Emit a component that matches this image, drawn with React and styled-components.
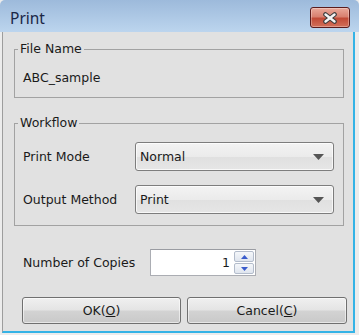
import React from 'react';
import styled, { createGlobalStyle } from 'styled-components';

const Global = createGlobalStyle`
  html, body { margin: 0; padding: 0; background: #ececec; }
  body { font-family: "DejaVu Sans", sans-serif; }
  * { box-sizing: border-box; }
`;

const Window = styled.div`
  width: 359px;
  height: 335px;
  display: flex;
  flex-direction: column;
  background: #ececec;
  border-top-left-radius: 5px;
  border-top-right-radius: 5px;
  overflow: hidden;
  font-family: "DejaVu Sans", sans-serif;
  font-size: 12.5px;
  color: #1a1a1a;
`;

const TitleBar = styled.div`
  height: 32px;
  flex: none;
  display: flex;
  justify-content: space-between;
  align-items: flex-start;
  padding: 0 9px 0 10px;
  background: linear-gradient(#9dbadb, #bcd5ee);
`;

const Title = styled.div`
  font-family: "Noto Sans", sans-serif;
  font-size: 15.5px;
  line-height: 20px;
  padding-top: 8px;
  color: #1b2747;
`;

const CloseButton = styled.button`
  margin-top: 7px;
  width: 40px;
  height: 21px;
  padding: 0;
  border: 1px solid #5b1c1c;
  border-radius: 3px;
  background: linear-gradient(#eaa99a 0%, #d98170 45%, #c24b37 55%, #d2705a 100%);
  box-shadow: inset 0 0 0 1px rgba(255, 255, 255, 0.3);
  display: flex;
  align-items: center;
  justify-content: center;
`;

const Body = styled.div`
  flex: 1;
  margin: 0 4px 2px 2px;
  padding: 9px 5px 0 11px;
  background: #e1e1e1;
  border-left: 1px solid #9d9d9d;
  border-right: 2px solid #35b3e6;
  border-bottom: 2px solid #35b3e6;
  display: flex;
  flex-direction: column;
`;

const Group = styled.fieldset`
  margin: ${(p) => (p.$first ? '0' : '17px')} 4px 0 0;
  padding: 0;
  min-width: 0;
  border: 1px solid #a2a2a2;
`;

const Legend = styled.legend`
  margin-left: 3px;
  padding: 0 2px 2px;
  line-height: 15px;
  font-size: 12.5px;
`;

const GroupText = styled.div`
  padding: 12px 0 12px 8px;
  line-height: 15px;
`;

const FormGrid = styled.div`
  display: grid;
  grid-template-columns: 112px 1fr;
  row-gap: 14px;
  align-items: center;
  padding: 10px 9px 11px 8px;
`;

const Label = styled.span`
  line-height: 15px;
  white-space: nowrap;
`;

const Select = styled.div`
  height: 29px;
  display: flex;
  align-items: center;
  justify-content: space-between;
  padding: 0 9px 0 4px;
  border: 1px solid #7d7d7d;
  border-radius: 3px;
  background: linear-gradient(#f3f3f3 0%, #ebebeb 50%, #e0e0e0 51%, #e6e6e6 100%);
  box-shadow: inset 0 0 0 1px rgba(255, 255, 255, 0.7);
  line-height: 15px;
`;

const CopiesRow = styled.div`
  margin: 23px 0 0 9px;
  display: grid;
  grid-template-columns: 127px auto;
  align-items: center;
  justify-content: start;
`;

const SpinBox = styled.div`
  width: 106px;
  height: 27px;
  display: flex;
  border: 1px solid #abadb3;
  border-top-color: #9a9ca2;
  background: #ffffff;
`;

const SpinField = styled.div`
  flex: 1;
  text-align: right;
  padding-right: 4px;
  line-height: 25px;
`;

const Spinner = styled.div`
  width: 21px;
  display: flex;
  flex-direction: column;
  gap: 1px;
  padding: 1px 1px 1px 0;
`;

const SpinButton = styled.div`
  flex: 1;
  display: flex;
  align-items: center;
  justify-content: center;
  border: 1px solid #b3bccb;
  border-radius: 2px;
  background: linear-gradient(#f5f7fa, #dfe5ee);
`;

const ButtonRow = styled.div`
  margin: 21px 1px 0 8px;
  display: grid;
  grid-template-columns: 159px 160px;
  column-gap: 6px;
`;

const Button = styled.button`
  height: 27px;
  padding: 0;
  border: 1px solid #707070;
  border-radius: 3px;
  background: linear-gradient(#f0f0f0 0%, #e4e4e4 48%, #d3d3d3 52%, #c9c9c9 100%);
  box-shadow: inset 0 0 0 1px rgba(255, 255, 255, 0.55);
  font-family: "DejaVu Sans", sans-serif;
  font-size: 12.5px;
  color: #1a1a1a;
  line-height: 15px;
`;

const Arrow = () => (
  <svg width="11" height="6" viewBox="0 0 11 6">
    <path d="M0 0 H11 L5.5 6 Z" fill="#555555" />
  </svg>
);

const SpinArrow = ({ up }) => (
  <svg width="7" height="4" viewBox="0 0 7 4">
    <path d={up ? 'M0 4 H7 L3.5 0 Z' : 'M0 0 H7 L3.5 4 Z'} fill="#3a5ccc" />
  </svg>
);

const CloseIcon = () => (
  <svg width="16" height="12" viewBox="0 0 16 12">
    <path d="M3.5 2.5 L12.5 9.5 M12.5 2.5 L3.5 9.5" stroke="#3d3d3d" strokeWidth="4.6" strokeLinecap="round" fill="none" />
    <path d="M3.5 2.5 L12.5 9.5 M12.5 2.5 L3.5 9.5" stroke="#f4f4f4" strokeWidth="2.4" strokeLinecap="round" fill="none" />
  </svg>
);

export default function App() {
  return (
    <>
      <Global />
      <Window>
        <TitleBar>
          <Title>Print</Title>
          <CloseButton aria-label="Close">
            <CloseIcon />
          </CloseButton>
        </TitleBar>
        <Body>
          <Group $first>
            <Legend>File Name</Legend>
            <GroupText>ABC_sample</GroupText>
          </Group>
          <Group>
            <Legend>Workflow</Legend>
            <FormGrid>
              <Label>Print Mode</Label>
              <Select>
                <span>Normal</span>
                <Arrow />
              </Select>
              <Label>Output Method</Label>
              <Select>
                <span>Print</span>
                <Arrow />
              </Select>
            </FormGrid>
          </Group>
          <CopiesRow>
            <Label>Number of Copies</Label>
            <SpinBox>
              <SpinField>1</SpinField>
              <Spinner>
                <SpinButton><SpinArrow up /></SpinButton>
                <SpinButton><SpinArrow /></SpinButton>
              </Spinner>
            </SpinBox>
          </CopiesRow>
          <ButtonRow>
            <Button>OK(<u>O</u>)</Button>
            <Button>Cancel(<u>C</u>)</Button>
          </ButtonRow>
        </Body>
      </Window>
    </>
  );
}
